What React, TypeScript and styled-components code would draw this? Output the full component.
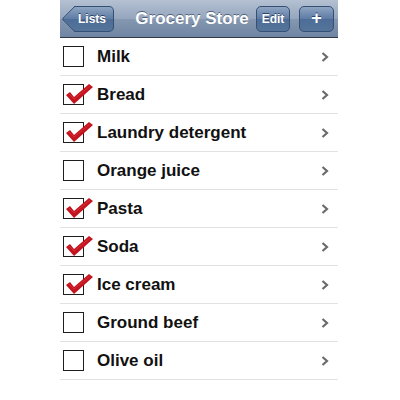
import styled, { createGlobalStyle } from "styled-components";

const items = [
    { name: "Milk", done: false },
    { name: "Bread", done: true },
    { name: "Laundry detergent", done: true },
    { name: "Orange juice", done: false },
    { name: "Pasta", done: true },
    { name: "Soda", done: true },
    { name: "Ice cream", done: true },
    { name: "Ground beef", done: false },
    { name: "Olive oil", done: false },
];

const GlobalStyle = createGlobalStyle`
    html, body {
        margin: 0;
        padding: 0;
        background: #ffffff;
        font-family: "Liberation Sans", Arial, sans-serif;
    }
`;

export default function App() {
    return (
        <>
            <GlobalStyle />
            <Screen>
                <NavBar>
                    <BackButton>
                        <ButtonLabel>Lists</ButtonLabel>
                    </BackButton>
                    <Title>Grocery Store</Title>
                    <BarButton>Edit</BarButton>
                    <BarButton $wide>+</BarButton>
                </NavBar>
                <List>
                    {items.map((item) => (
                        <Row key={item.name}>
                            <CheckBox>
                                {item.done && (
                                    <CheckMark viewBox="0 0 30 26">
                                        <polygon
                                            points="1,13 5,10 9,15 24,2 28,5 9,22"
                                            fill="#c41420"
                                        />
                                        <polyline
                                            points="4,12 9,17 25,4"
                                            fill="none"
                                            stroke="#e34850"
                                            strokeWidth="1"
                                            opacity="0.5"
                                        />
                                    </CheckMark>
                                )}
                            </CheckBox>
                            <Name>{item.name}</Name>
                            <Chevron viewBox="0 0 8 10">
                                <polyline
                                    points="1.5,1 6,5 1.5,9"
                                    fill="none"
                                    stroke="#6a6a6a"
                                    strokeWidth="2.2"
                                />
                            </Chevron>
                        </Row>
                    ))}
                </List>
            </Screen>
        </>
    );
}

const buttonFill = "linear-gradient(#8fa5c2, #5d7ba4 50%, #4d6d98 51%, #557499)";

const Screen = styled.div`
    width: 278px;
    margin-left: 60px;
`;

const NavBar = styled.div`
    display: flex;
    align-items: center;
    height: 37px;
    padding: 0 4px 0 5px;
    background: linear-gradient(
        #b5c1d3 0%,
        #95a6bd 50%,
        #8698b1 51%,
        #6f85a3 100%
    );
    border-bottom: 1px solid #2e3949;
`;

const BackButton = styled.div`
    position: relative;
    margin-left: 9px;
    height: 24px;
    padding: 0 7px 0 4px;
    display: flex;
    align-items: center;
    background: ${buttonFill};
    border: 1px solid #344f74;
    border-left: none;
    border-radius: 0 5px 5px 0;

    &::before {
        content: "";
        position: absolute;
        left: -9px;
        top: 3px;
        width: 17px;
        height: 17px;
        transform: rotate(45deg);
        background: linear-gradient(135deg, #8fa5c2, #5d7ba4 50%, #4d6d98 51%, #557499);
        border-left: 1px solid #344f74;
        border-bottom: 1px solid #344f74;
        border-radius: 0 0 0 3px;
    }
`;

const ButtonLabel = styled.span`
    position: relative;
    color: #fff;
    font-size: 12px;
    font-weight: bold;
    text-shadow: 0 -1px 0 #2c4365;
`;

const Title = styled.div`
    flex: 1;
    padding-left: 14px;
    text-align: center;
    color: #fff;
    font-size: 17px;
    font-weight: bold;
    text-shadow: 0 -1px 0 #51627a;
    white-space: nowrap;
`;

const BarButton = styled.div<{ $wide?: boolean }>`
    width: ${({ $wide }) => ($wide ? "33px" : "32px")};
    height: 24px;
    margin-left: ${({ $wide }) => ($wide ? "9px" : "0")};
    display: flex;
    align-items: center;
    justify-content: center;
    color: #fff;
    font-size: ${({ $wide }) => ($wide ? "18px" : "12px")};
    font-weight: bold;
    text-shadow: 0 -1px 0 #2c4365;
    background: ${buttonFill};
    border: 1px solid #344f74;
    border-radius: 5px;
`;

const List = styled.div`
    display: flex;
    flex-direction: column;
`;

const Row = styled.div`
    display: flex;
    align-items: center;
    height: 37px;
    border-bottom: 1px solid #e2e2e2;
    padding: 0 9px 0 3px;
`;

const CheckBox = styled.div`
    position: relative;
    width: 19px;
    height: 19px;
    border: 1.5px solid #1e1e1e;
    background: #fff;
    flex-shrink: 0;
`;

const CheckMark = styled.svg`
    position: absolute;
    left: 1px;
    top: -3px;
    width: 30px;
    height: 26px;
    overflow: visible;
`;

const Name = styled.div`
    flex: 1;
    margin-left: 13px;
    font-size: 17px;
    font-weight: bold;
    color: #111;
`;

const Chevron = styled.svg`
    width: 8px;
    height: 10px;
`;
